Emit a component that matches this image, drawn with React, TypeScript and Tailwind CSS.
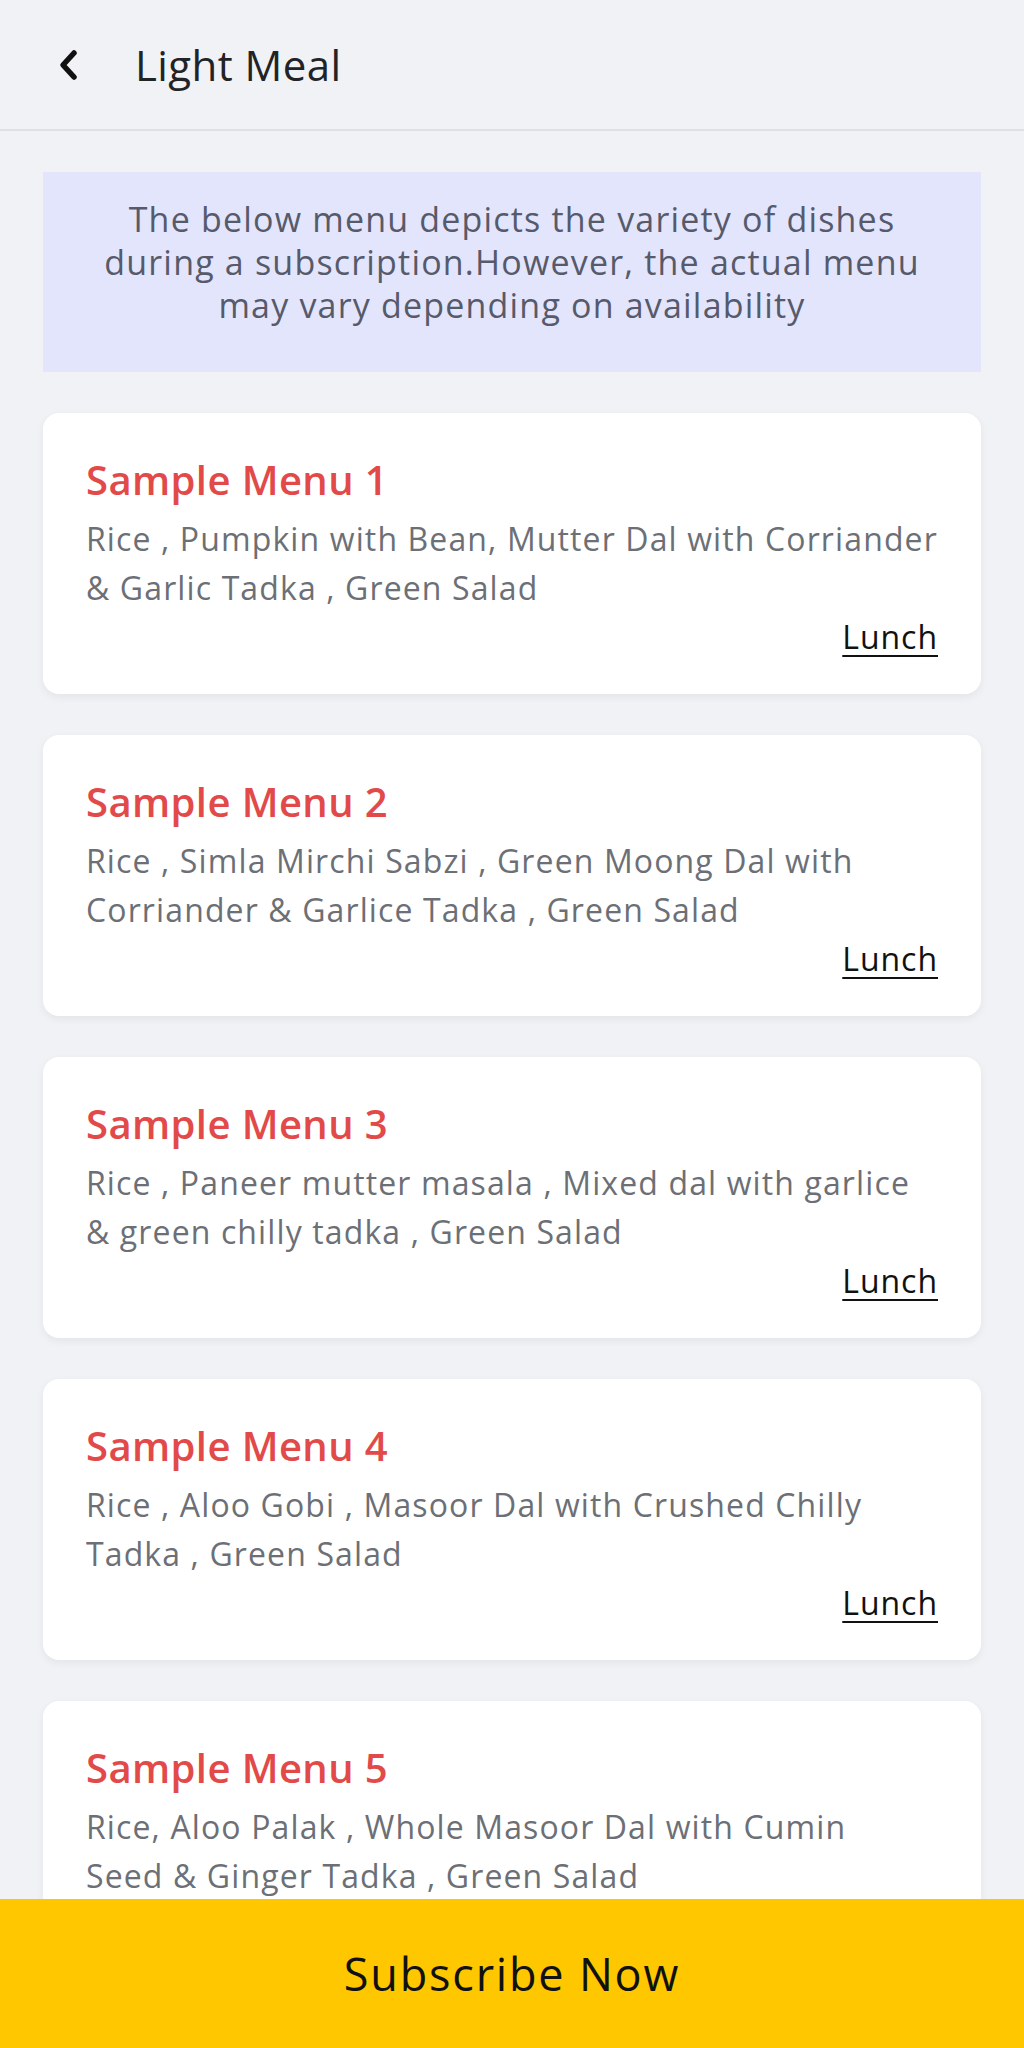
import React from "react";

const menus = [
  {
    title: "Sample Menu 1",
    lines: ["Rice , Pumpkin with Bean, Mutter Dal with Corriander", "& Garlic Tadka , Green Salad"],
  },
  {
    title: "Sample Menu 2",
    lines: ["Rice , Simla Mirchi Sabzi , Green Moong Dal with", "Corriander & Garlice Tadka , Green Salad"],
  },
  {
    title: "Sample Menu 3",
    lines: ["Rice , Paneer mutter masala , Mixed dal with garlice", "& green chilly tadka , Green Salad"],
  },
  {
    title: "Sample Menu 4",
    lines: ["Rice , Aloo Gobi , Masoor Dal with Crushed Chilly", "Tadka , Green Salad"],
  },
  {
    title: "Sample Menu 5",
    lines: ["Rice, Aloo Palak , Whole Masoor Dal with Cumin", "Seed & Ginger Tadka , Green Salad"],
  },
];

function MenuCard({ title, lines }: { title: string; lines: string[] }) {
  return (
    <div className="rounded-[16px] bg-white px-[43px] pb-[33px] pt-[43px] shadow-[0_3px_8px_rgba(0,0,0,0.06)]">
      <h2 className="text-[40px] font-semibold leading-[48px] tracking-[0.01em] text-[#e24a4a]">
        {title}
      </h2>
      <p className="mt-[10px] whitespace-nowrap text-[32px] leading-[49px] tracking-[0.035em] text-[#6c7076]">
        {lines[0]}
        <br />
        {lines[1]}
      </p>
      <div className="flex justify-end">
        <span className="text-[32px] leading-[49px] tracking-[0.03em] text-[#111] underline decoration-2 underline-offset-[6px]">
          Lunch
        </span>
      </div>
    </div>
  );
}

export default function App() {
  return (
    <div
      className="min-h-screen bg-[#f1f2f6]"
      style={{ fontFamily: "'Open Sans', 'Noto Sans', sans-serif" }}
    >
      <header className="flex h-[131px] items-center border-b-2 border-[#dfe0e5] pl-[56px]">
        <svg width="26" height="34" viewBox="0 0 26 34" className="shrink-0">
          <polyline
            points="18,5 7,17 18,29"
            fill="none"
            stroke="#111"
            strokeWidth="5.5"
            strokeLinecap="round"
            strokeLinejoin="round"
          />
        </svg>
        <h1 className="ml-[53px] text-[42px] tracking-[0.01em] text-[#222327]">Light Meal</h1>
      </header>

      <main className="flex flex-col gap-[41px] px-[43px] pb-[200px] pt-[41px]">
        <div className="flex h-[200px] items-center justify-center bg-[#e3e5fd] px-[20px] pb-[20px]">
          <p className="text-center text-[34px] leading-[43px] tracking-[0.035em] text-[#565a6a]">
            The below menu depicts the variety of dishes
            <br />
            during a subscription.However, the actual menu
            <br />
            may vary depending on availability
          </p>
        </div>
        {menus.map((m) => (
          <MenuCard key={m.title} title={m.title} lines={m.lines} />
        ))}
      </main>

      <button className="fixed inset-x-0 bottom-0 flex h-[149px] items-center justify-center bg-[#fec700] text-[45px] tracking-[0.04em] text-[#111]">
        Subscribe Now
      </button>
    </div>
  );
}
